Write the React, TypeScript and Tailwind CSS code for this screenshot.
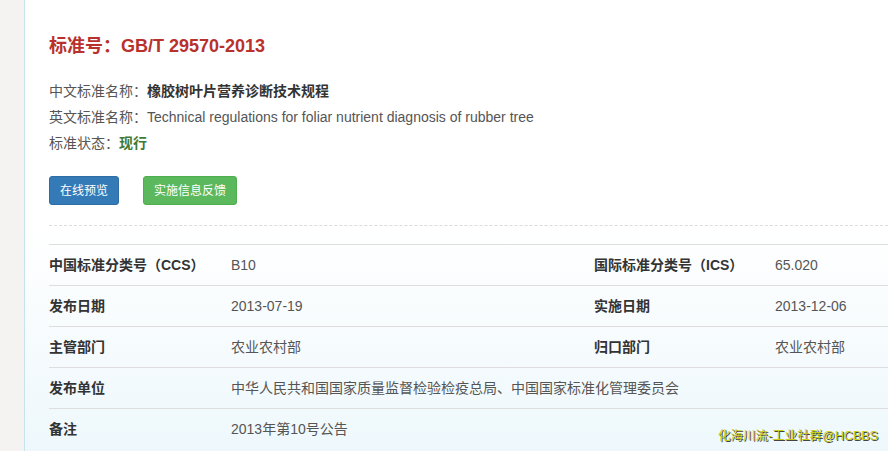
import React from "react";

const rows: [string, string, string?, string?][] = [
  ["中国标准分类号（CCS）", "B10", "国际标准分类号（ICS）", "65.020"],
  ["发布日期", "2013-07-19", "实施日期", "2013-12-06"],
  ["主管部门", "农业农村部", "归口部门", "农业农村部"],
  ["发布单位", "中华人民共和国国家质量监督检验检疫总局、中国国家标准化管理委员会"],
  ["备注", "2013年第10号公告"],
];

export default function App() {
  return (
    <div
      className="relative flex h-[451px] w-[888px] overflow-hidden bg-white"
      style={{ fontFamily: '"Liberation Sans", "Noto Sans CJK SC", sans-serif' }}
    >
      <div className="w-[24px] shrink-0 bg-[#f4f3f2]" />
      <div className="flex-1 border-l border-[#c6e4ee] bg-gradient-to-b from-white from-50% to-[#eef8fc] pl-[24px] pt-[33px]">
        <h1 className="h-[26px] text-[18px] font-bold leading-[26px] text-[#b8312c]">
          标准号：GB/T 29570-2013
        </h1>
        <div className="mt-[19px] text-[14px] leading-[26px] text-[#555]">
          <div>
            中文标准名称：<span className="font-bold text-[#333]">橡胶树叶片营养诊断技术规程</span>
          </div>
          <div>英文标准名称：Technical regulations for foliar nutrient diagnosis of rubber tree</div>
          <div>
            标准状态：<span className="font-bold text-[#3f7a35]">现行</span>
          </div>
        </div>
        <div className="mt-[20px] flex gap-[24px]">
          <div className="flex h-[29px] w-[70px] items-center justify-center rounded-[3px] border border-[#2e6da4] bg-[#337ab7] text-[12px] text-white">
            在线预览
          </div>
          <div className="flex h-[29px] w-[94px] items-center justify-center rounded-[3px] border border-[#4cae4c] bg-[#5cb85c] text-[12px] text-white">
            实施信息反馈
          </div>
        </div>
        <div className="mt-[20px] border-t border-dashed border-[#dcdcdc]" />
        <div className="mt-[18px] border-t border-[#dedede]">
          {rows.map((r, i) => (
            <div
              key={i}
              className={
                (i < rows.length - 1 ? "border-b border-[#dedede] " : "") +
                "flex h-[41px] items-center text-[14px]"
              }
            >
              <div className="w-[182px] shrink-0 font-bold text-[#333]">{r[0]}</div>
              <div className={(r[2] ? "w-[363px] " : "flex-1 ") + "shrink-0 text-[#555]"}>{r[1]}</div>
              {r[2] && (
                <>
                  <div className="w-[181px] shrink-0 font-bold text-[#333]">{r[2]}</div>
                  <div className="flex-1 text-[#555]">{r[3]}</div>
                </>
              )}
            </div>
          ))}
        </div>
      </div>
      <div
        className="absolute bottom-[6px] right-[10px] text-[12.5px] leading-[18px] text-[#cccc1a]"
        style={{ textShadow: "1px 1px 0 #444" }}
      >
        化海川流-工业社群@HCBBS
      </div>
    </div>
  );
}
